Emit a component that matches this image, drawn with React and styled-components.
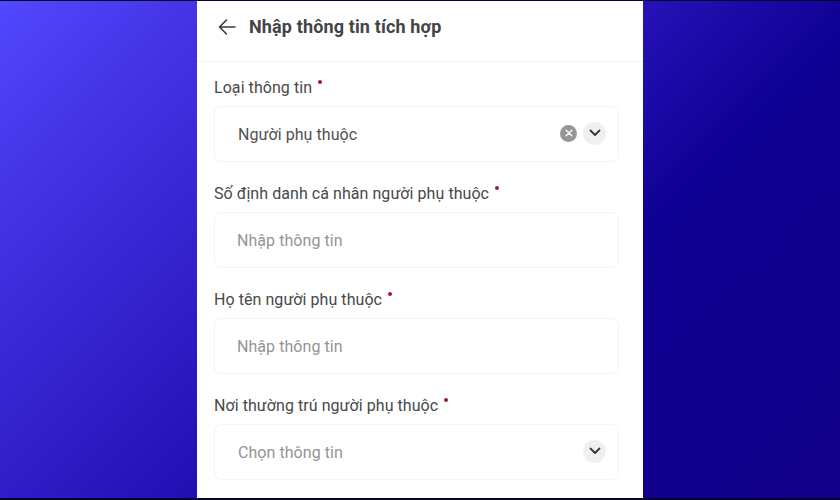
import React from "react";
import styled, { createGlobalStyle } from "styled-components";

const GlobalStyle = createGlobalStyle`
  html, body {
    margin: 0;
    padding: 0;
    background: #000;
  }
  body {
    font-family: Roboto, "Noto Sans", sans-serif;
  }
`;

const Stage = styled.div`
  width: 840px;
  height: 500px;
  padding: 1px 0 2px;
  box-sizing: border-box;
  overflow: hidden;
  background: #05052a;
`;

const Backdrop = styled.div`
  height: 100%;
  display: flex;
  justify-content: center;
  background: linear-gradient(135deg, #5248ff 0%, #4434e6 15%, #2410b4 50%, #0e0092 66%, #120088 100%);
`;

const Phone = styled.div`
  width: 446px;
  background: #fff;
  display: flex;
  flex-direction: column;
  overflow: hidden;
`;

const Header = styled.header`
  height: 61px;
  box-sizing: border-box;
  display: flex;
  align-items: center;
  gap: 12px;
  padding: 0 20px 9px;
  border-bottom: 1px solid #f2f2f0;
  flex-shrink: 0;
`;

const BackButton = styled.button`
  width: 20px;
  height: 20px;
  padding: 0;
  border: 0;
  background: none;
  color: #3a3a3c;
  display: flex;
`;

const Title = styled.h1`
  margin: 0;
  font-size: 18px;
  font-weight: 700;
  letter-spacing: 0.14px;
  color: #444446;
`;

const Form = styled.form`
  display: flex;
  flex-direction: column;
  gap: 21px;
  padding: 15px 24px 0 17px;
`;

const Field = styled.div`
  display: flex;
  flex-direction: column;
  gap: 7px;
`;

const Label = styled.label`
  font-size: 16px;
  line-height: 22px;
  letter-spacing: 0.06px;
  color: #48484a;
`;

const Required = styled.span`
  display: inline-block;
  width: 4px;
  height: 4px;
  margin-left: 6px;
  border-radius: 50%;
  background: #a5173a;
  vertical-align: 9px;
`;

const Control = styled.div`
  height: 56px;
  box-sizing: border-box;
  border: 1px solid #f3f3f2;
  border-radius: 7px;
  padding: 0 12px 2px ${(p) => (p.$inset ? 22 : 23)}px;
  display: flex;
  align-items: center;
  gap: 6px;
`;

const Value = styled.span`
  flex: 1;
  padding-top: 2px;
  font-size: 16px;
  letter-spacing: 0.06px;
  color: ${(p) => (p.$placeholder ? "#949496" : "#505052")};
`;

const ClearButton = styled.span`
  width: 17px;
  height: 17px;
  border-radius: 50%;
  background: #969696;
  color: #f4f4f4;
  display: flex;
  align-items: center;
  justify-content: center;
`;

const ChevronButton = styled.span`
  width: 23px;
  height: 23px;
  border-radius: 50%;
  background: #f0f0f0;
  color: #36363a;
  display: flex;
  align-items: center;
  justify-content: center;
`;

const Chevron = () => (
  <ChevronButton>
    <svg width="12" height="8" viewBox="0 0 12 8" fill="none">
      <path d="M1.5 1.5 6 6l4.5-4.5" stroke="currentColor" strokeWidth="1.8" strokeLinecap="round" strokeLinejoin="round" />
    </svg>
  </ChevronButton>
);

const Clear = () => (
  <ClearButton>
    <svg width="8" height="8" viewBox="0 0 8 8" fill="none">
      <path d="M1.2 1.2l5.6 5.6M6.8 1.2 1.2 6.8" stroke="currentColor" strokeWidth="1.6" strokeLinecap="round" />
    </svg>
  </ClearButton>
);

const FormField = ({ label, children }) => (
  <Field>
    <Label>
      {label}
      <Required />
    </Label>
    {children}
  </Field>
);

export default function App() {
  return (
    <>
      <GlobalStyle />
      <Stage>
        <Backdrop>
          <Phone>
            <Header>
              <BackButton type="button" aria-label="Quay lại">
                <svg width="20" height="20" viewBox="0 0 20 20" fill="none">
                  <path d="M18 10H3M9.5 3 2.5 10l7 7" stroke="currentColor" strokeWidth="1.6" strokeLinecap="round" strokeLinejoin="round" />
                </svg>
              </BackButton>
              <Title>Nhập thông tin tích hợp</Title>
            </Header>
            <Form>
              <FormField label="Loại thông tin">
                <Control>
                  <Value>Người phụ thuộc</Value>
                  <Clear />
                  <Chevron />
                </Control>
              </FormField>
              <FormField label="Số định danh cá nhân người phụ thuộc">
                <Control $inset>
                  <Value $placeholder>Nhập thông tin</Value>
                </Control>
              </FormField>
              <FormField label="Họ tên người phụ thuộc">
                <Control $inset>
                  <Value $placeholder>Nhập thông tin</Value>
                </Control>
              </FormField>
              <FormField label="Nơi thường trú người phụ thuộc">
                <Control>
                  <Value $placeholder>Chọn thông tin</Value>
                  <Chevron />
                </Control>
              </FormField>
            </Form>
          </Phone>
        </Backdrop>
      </Stage>
    </>
  );
}
